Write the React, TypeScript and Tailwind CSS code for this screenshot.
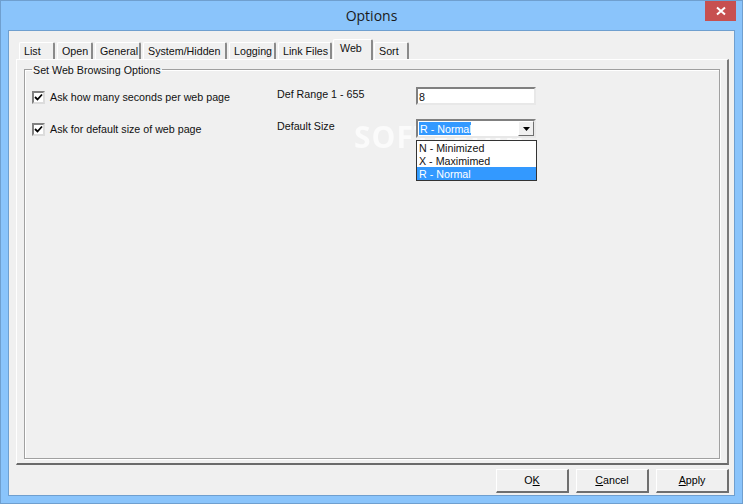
const font = '[font-family:"Liberation_Sans",Arial,sans-serif]';

const tabs = [
  { label: 'List', width: 'w-[36px]' },
  { label: 'Open', width: 'w-[36px]' },
  { label: 'General', width: 'w-[46px]' },
  { label: 'System/Hidden', width: 'w-[84px]' },
  { label: 'Logging', width: 'w-[47px]' },
  { label: 'Link Files', width: 'w-[54px]' },
];

function Tab({ label, width, active = false }: { label: string; width: string; active?: boolean }) {
  return (
    <div
      className={`${width} shrink-0 border-t border-l border-white border-r-2 border-r-[#8a8a8a] rounded-t-[2px] text-[10.7px] leading-[16px] whitespace-nowrap ${
        active ? 'h-[21px] -mb-px -mx-[1px] z-10 bg-[#f0f0f0] pl-[6px]' : 'h-[17px] pl-[4px]'
      }`}
    >
      {label}
    </div>
  );
}

function CheckRow({ label }: { label: string }) {
  return (
    <div className="flex items-center gap-[5px] h-[13px]">
      <div className="w-[13px] h-[13px] shrink-0 bg-white border-2 border-t-[#808080] border-l-[#808080] border-r-[#dcdcdc] border-b-[#dcdcdc] flex items-center justify-center">
        <svg width="9" height="9" viewBox="0 0 9 9">
          <path d="M1 4 L3.5 6.5 L8 1.5" fill="none" stroke="#000" strokeWidth="1.8" />
        </svg>
      </div>
      <span className="text-[10.7px] leading-[13px] whitespace-nowrap">{label}</span>
    </div>
  );
}

function Btn({ children }: { children: React.ReactNode }) {
  return (
    <button className="w-[73px] h-[24px] text-[10.7px] bg-[#f0f0f0] border-t border-l border-white border-r-2 border-b-2 border-r-[#6f6f6f] border-b-[#6f6f6f] text-black">
      {children}
    </button>
  );
}

export default function App() {
  return (
    <div className={`${font} w-[743px] h-[504px] bg-[#8ac4fb] border border-[#6f9fcf] flex flex-col text-[#111] overflow-hidden`}>
      {/* title bar */}
      <div className="h-[29px] shrink-0 grid grid-cols-[1fr_auto_1fr] pl-[6px] pr-[6px]">
        <div />
        <div className="text-[14px] text-[#1a1a1a] leading-[29px] [font-family:'Open_Sans',sans-serif]">Options</div>
        <div className="justify-self-end w-[31px] h-[20px] bg-[#c75050] flex items-center justify-center">
          <svg width="10" height="10" viewBox="0 0 10 10">
            <path d="M1 1.5 L9 8.5 M9 1.5 L1 8.5" stroke="#fff" strokeWidth="2" />
          </svg>
        </div>
      </div>

      {/* client area */}
      <div className="relative mx-[7px] h-[466px] bg-[#f0f0f0] border border-[#6f9fcf] px-[7px] pt-[8px]">
        {/* watermark */}
        <div className="absolute left-[345px] top-[88px] text-[30px] leading-[36px] font-bold text-white/70 tracking-[1px] pointer-events-none blur-[0.5px] [font-family:'Open_Sans',sans-serif]">
          SOFTPEDIA
        </div>

        {/* tab strip */}
        <div className="relative flex items-end h-[20px] pl-[3px] gap-[2px]">
          {tabs.map((t) => (
            <Tab key={t.label} label={t.label} width={t.width} />
          ))}
          <Tab label="Web" width="w-[40px]" active />
          <Tab label="Sort" width="w-[35px]" />
        </div>

        {/* page */}
        <div className="relative w-[713px] h-[406px] border-t border-l border-white border-r-2 border-b-2 border-r-[#7a7a7a] border-b-[#6a6a6a] px-[7px] pt-[3px]">
          <fieldset className="h-[396px] border border-[#a0a0a0] shadow-[inset_1px_1px_0_#fff,1px_1px_0_#fff] pl-[7px]">
            <legend className="relative top-px px-[1px] text-[10.7px] leading-[13px]">Set Web Browsing Options</legend>
            <div className="flex pt-[14px]">
              <div className="w-[245px] flex flex-col gap-[19px] pt-[1px]">
                <CheckRow label="Ask how many seconds per web page" />
                <CheckRow label="Ask for default size of web page" />
              </div>
              <div className="w-[139px] flex flex-col gap-[19px] -mt-[2px]">
                <span className="text-[10.7px] leading-[13px]">Def Range 1 - 655</span>
                <span className="text-[10.7px] leading-[13px]">Default Size</span>
              </div>
              <div className="flex flex-col gap-[14px] -mt-[3px]">
                <div className="w-[120px] h-[18px] bg-white border-2 border-t-[#808080] border-l-[#808080] border-r-[#e8e8e8] border-b-[#e8e8e8] text-[10.7px] leading-[17px] pl-[1px]">
                  8
                </div>
                <div className="relative w-[120px] h-[19px] bg-white border-2 border-t-[#808080] border-l-[#808080] border-r-[#e8e8e8] border-b-[#e8e8e8] flex items-center">
                  <span className="ml-[1px] h-[13px] bg-[#3399ff] text-white text-[10.7px] leading-[15px] px-[1px] w-[52px] whitespace-nowrap">R - Normal</span>
                  <div className="ml-auto w-[16px] h-[15px] bg-[#f0f0f0] border-t border-l border-white border-r border-b border-r-[#6f6f6f] border-b-[#6f6f6f] flex items-center justify-center">
                    <svg width="7" height="4" viewBox="0 0 7 4">
                      <path d="M0 0 H7 L3.5 4 Z" fill="#000" />
                    </svg>
                  </div>
                  {/* open dropdown list */}
                  <div className="absolute left-[-2px] top-[19px] w-[121px] h-[41px] bg-white border border-[#333] text-[10.7px] leading-[15px] z-20">
                    <div className="h-[13px] pl-[2px]">N - Minimized</div>
                    <div className="h-[13px] pl-[2px]">X - Maximimed</div>
                    <div className="h-[13px] pl-[2px] bg-[#3399ff] text-white">R - Normal</div>
                  </div>
                </div>
              </div>
            </div>
          </fieldset>
        </div>

        {/* buttons */}
        <div className="flex justify-end gap-[7px] mt-[4px] -mr-[2px]">
          <Btn>O<u>K</u></Btn>
          <Btn><u>C</u>ancel</Btn>
          <Btn><u>A</u>pply</Btn>
        </div>
      </div>
    </div>
  );
}
